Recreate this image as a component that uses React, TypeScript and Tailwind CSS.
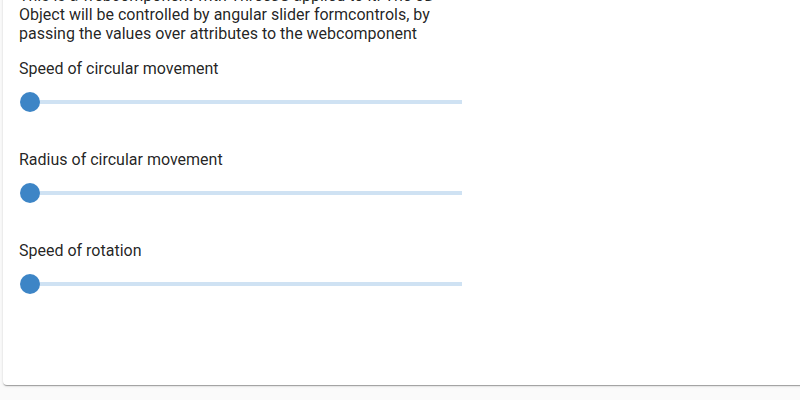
import React from "react";

const sliders = [
    "Speed of circular movement",
    "Radius of circular movement",
    "Speed of rotation",
];

function Slider({ label }: { label: string }) {
    return (
        <div>
            <div className="text-[16px] leading-[19px]">{label}</div>
            <div className="relative flex h-12 w-[454px] items-center px-[11px]">
                <div className="h-1 w-full bg-[#cfe2f3]" />
                <div className="absolute left-[1px] top-[14px] h-5 w-5 rounded-full bg-[#3d85c6]" />
            </div>
        </div>
    );
}

export default function App() {
    return (
        <div
            className="h-[400px] w-[800px] overflow-hidden bg-[#fafafa] text-[rgba(0,0,0,0.87)]"
            style={{ fontFamily: "Roboto, 'Noto Sans', sans-serif" }}
        >
            <div className="-mt-[20px] ml-[3px] w-[820px] rounded-b bg-white px-4 pb-[77px] pt-[7px] shadow-[0_2px_1px_-1px_rgba(0,0,0,0.2),0_1px_1px_0_rgba(0,0,0,0.14),0_1px_3px_0_rgba(0,0,0,0.12)]">
                <p className="mb-[15.5px] w-[440px] text-[16px] leading-[18.75px]">
                    This is a webcomponent with ThreeJS applied to it. The 3D Object will be controlled by angular slider formcontrols, by passing the values over attributes to the webcomponent
                </p>
                <div className="flex flex-col gap-6">
                    {sliders.map(s => (
                        <Slider key={s} label={s} />
                    ))}
                </div>
            </div>
        </div>
    );
}
